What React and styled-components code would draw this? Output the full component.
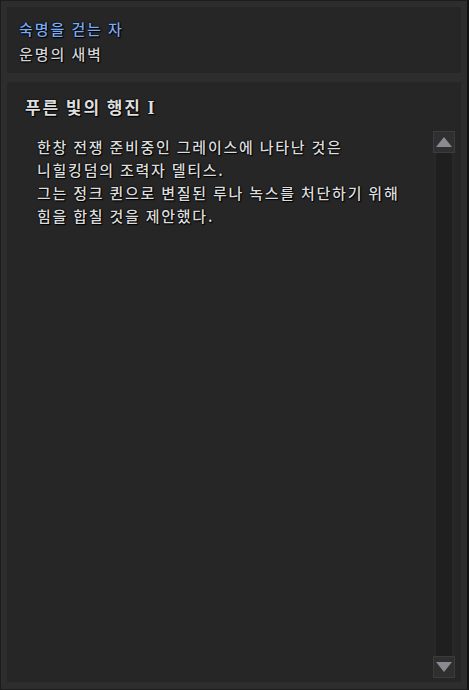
import styled, { createGlobalStyle } from 'styled-components';

const Global = createGlobalStyle`
html, body { margin:0; padding:0; background:#2d2d2d; }
body { font-family: "Noto Sans CJK KR", "Noto Sans", sans-serif; }
`

const Frame = styled.div`
width:469px;
height:690px;
box-sizing:border-box;
background:#2d2d2d;
border:1px solid #1c1c1c;
border-right:2px solid #111;
padding:6px 6px 7px 6px;
display:flex;
flex-direction:column;
gap:9px;
`

const Header = styled.div`
background:#262626;
height:66px;
box-sizing:border-box;
padding:11px 12px 0;
display:flex;
flex-direction:column;
gap:3px;
`

const shadow = `0 0 2px #000, 1px 1px 1px #000, 0 0 1px #000`;

const QuestLine = styled.div`
color:${p => p.$blue ? '#7aaaf0' : '#d4d4d4'};
font-size:15px;
letter-spacing:1.9px;
line-height:22px;
font-weight:500;
text-shadow:${shadow};
`

const Body = styled.div`
flex:1;
background:#262626;
display:flex;
flex-direction:column;
padding:13px 6px 4px 18px;
`

const Title = styled.div`
color:#dedede;
font-size:17px;
letter-spacing:1.9px;
font-weight:bold;
line-height:24px;
text-shadow:${shadow};
`

const Roman = styled.span`
font-family:"Liberation Serif", serif;
font-size:18px;
`

const Content = styled.div`
flex:1;
display:flex;
margin-top:5px;
`

const Text = styled.div`
flex:1;
padding:10px 0 0 12px;
color:#dcdcdc;
font-size:15px;
letter-spacing:1.75px;
font-weight:500;
line-height:23px;
text-shadow:${shadow};
`

const Scroll = styled.div`
width:22px;
margin-top:6px;
display:flex;
flex-direction:column;
`

const Arrow = styled.div`
height:22px;
box-sizing:border-box;
background:#2f2f2f;
border:1px solid #3c3c3c;
display:flex;
align-items:center;
justify-content:center;
&::after{
  content:'';
  width:0;height:0;
  border-left:8px solid transparent;
  border-right:8px solid transparent;
  ${p => p.$down ? 'border-top:10px solid #8a8a90;' : 'border-bottom:10px solid #8a8a90;'}
}
`

const Track = styled.div`
flex:1;
margin:0 2px;
background:#1f1f1f;
border-left:1px solid #2a2a2a;
border-right:1px solid #2a2a2a;
`

export default function App(){
  return (
    <>
      <Global/>
      <Frame>
        <Header>
          <QuestLine $blue>숙명을 걷는 자</QuestLine>
          <QuestLine>운명의 새벽</QuestLine>
        </Header>
        <Body>
          <Title>푸른 빛의 행진 <Roman>I</Roman></Title>
          <Content>
            <Text>
              한창 전쟁 준비중인 그레이스에 나타난 것은<br/>
              니힐킹덤의 조력자 델티스.<br/>
              그는 정크 퀸으로 변질된 루나 녹스를 처단하기 위해<br/>
              힘을 합칠 것을 제안했다.
            </Text>
            <Scroll>
              <Arrow/>
              <Track/>
              <Arrow $down/>
            </Scroll>
          </Content>
        </Body>
      </Frame>
    </>
  )
}
